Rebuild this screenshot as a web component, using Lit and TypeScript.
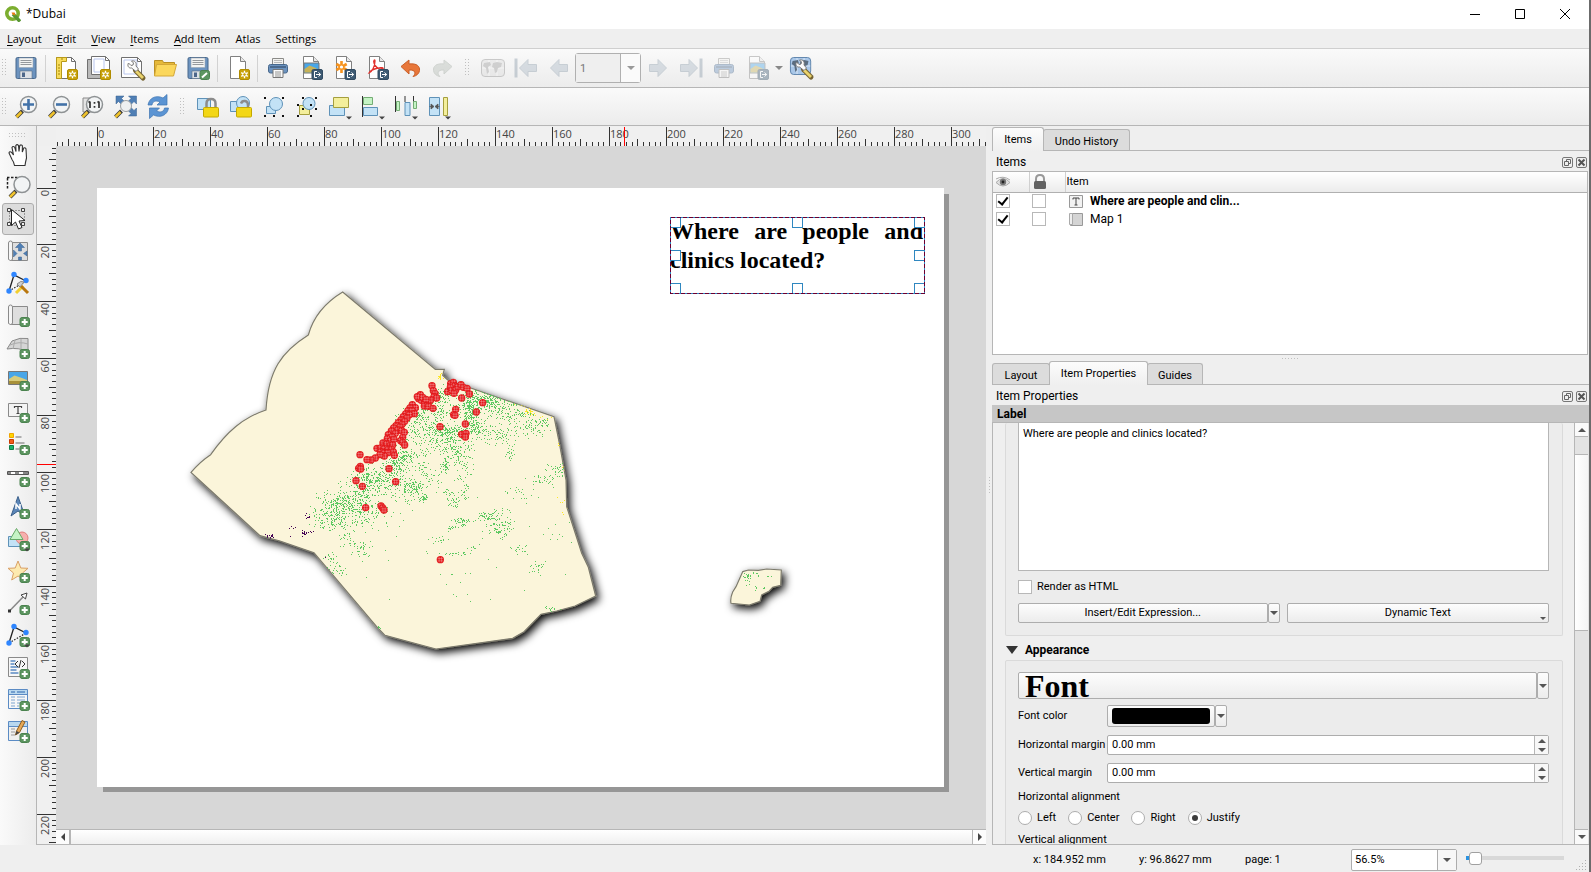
import { LitElement, html, svg, css, TemplateResult, SVGTemplateResult } from "lit";
import { customElement, property, state } from "lit/decorators.js";
import { classMap } from "lit/directives/class-map.js";

/* ---------- icon pieces ---------- */

const badgeNew = svg`<rect x="13.500" y="13.500" width="10" height="10" rx="1.500" fill="#c9a30c" stroke="#b08c00"/>
  <path d="M18.500 14.800v7.400M15.200 16.600l6.600 3.800M15.200 20.400l6.600-3.800" stroke="#fff" stroke-width="1.300"/>
  <circle cx="18.500" cy="18.500" r="1.800" fill="#c9a30c" stroke="#fff"/>`;
const badgePlus = svg`<rect x="14" y="14.500" width="9.500" height="9" rx="2" fill="#5c9560" stroke="#4a824e"/>
  <path d="M18.700 16v6M15.700 19h6" stroke="#fff" stroke-width="2"/>`;
const badgeExport = svg`<rect x="13" y="13.500" width="10.500" height="10" rx="1.500" fill="#3d5a73" stroke="#324b61"/>
  <path d="M18 15.500h-2.500v6H18M17 18.500h4.500M19.500 16.500l2.200 2-2.200 2" stroke="#fff" fill="none"/>`;
const page = svg`<path d="M4.500 .5h10l5 5v17h-15z" fill="#fff" stroke="#808080"/><path d="M14.500 .5v5h5" fill="#e8e8e8" stroke="#808080"/>`;
const floppy = svg`<rect x="2" y="1.500" width="20" height="21" rx="1.500" fill="#6c93bf" stroke="#48688c"/>
  <path d="M5 2h14v9.500H5z" fill="#f4f4f2" stroke="#9aa6b2" stroke-width=".6"/><path d="M6.500 4.500h11M6.500 6.500h11M6.500 8.500h11" stroke="#8b8f92" stroke-width=".9"/>
  <path d="M6 15h12v7.500H6z" fill="#dde1e6" stroke="#5b6f86" stroke-width=".6"/><path d="M8 16.500h3v4.500H8z" fill="#4d678a"/>`;
const printer = svg`<path d="M6.500 2.500h11v6h-11z" fill="#f3f3f1" stroke="#8b8b88"/><path d="M8 4.500h8M8 6.500h8" stroke="#aaa" stroke-width=".8"/>
  <rect x="2.500" y="8.500" width="19" height="8.500" rx="2" fill="#6c93bf" stroke="#48688c"/><path d="M4 11h16" stroke="#3d5878" stroke-width="1.400"/>
  <path d="M7 13.500h10v8H7z" fill="#fafafa" stroke="#777"/><path d="M9 16h6M9 18h6M9 20h6" stroke="#8b8b88" stroke-width=".9"/>`;
const picture = svg`<path d="M5 7h15v10H5z" fill="#49a6e8" stroke="#777"/><path d="M5.500 13l5-3.500 5 2 4.500 2.500v2.500H5.500z" fill="#c7b257"/>`;
const lens = svg`<path d="M2.500 22l6-6" stroke="#3c3c3c" stroke-width="4"/><path d="M2.500 22l5-5" stroke="#f0c32c" stroke-width="2.500"/>
  <circle cx="14.500" cy="9.500" r="8" fill="#f2f4f5" stroke="#8e9294" stroke-width="1.500"/>`;
const wrench = svg`<path d="M13.500 13.500l7.500 7.500" stroke="#766431" stroke-width="5" stroke-linecap="round"/><path d="M14 14l7 7" stroke="#ead36c" stroke-width="2.800"/>
  <path d="M14 14.500L9.500 11C6.500 11.500 5 8.500 6.500 6l2.500 2.500 2-.5.500-2L9.500 4c3-.8 5.500 1.500 4.500 5l2.500 3z" fill="#fbfbfb" stroke="#7a7a7a"/>`;
const roll = svg`<path d="M6 3.500h15.500v18H4" fill="#dedede" stroke="#8a8a8a"/><path d="M2.500 4q0-2 2-2t2 2v16.500q-2 2-4 0z" fill="#f5f5f5" stroke="#8a8a8a"/>`;
const nodeShape = svg`<path d="M3 20L8 4l12 6" fill="none" stroke="#222" stroke-width="1.300"/><path d="M3 20l17-10" stroke="#222" stroke-width="1.200" stroke-dasharray="1.500 1.500"/>
  <g fill="#2f86ff"><circle cx="3" cy="20" r="2.700"/><circle cx="8" cy="3.500" r="2.700"/><circle cx="20" cy="9.500" r="2.700"/></g>`;
const world = svg`<rect x=".5" y="3.500" width="23" height="17" rx="3.500" fill="#a9c7e8" stroke="#5c82ab"/>
  <path d="M8 4v16M16 4v16M1 12h22" stroke="#e8f0f8" stroke-width=".8"/>
  <path d="M3 7l6-1 1 3-3 2 1 5-2 2-1-6-3-2zM12 7l4-1 5 1-1 4-3 1-1 4-2 1-1-5-2-1z" fill="#5b6d80"/>`;
const dropMark = svg`<path d="M18 21.500h6l-3 3z" fill="#444"/>`;
const arrowLeft = svg`<path d="M3.500 12L12 3.500v5h8.500v7H12v5z" fill="#a9b7c4" stroke="#8697a6"/>`;

const icons: Record<string, SVGTemplateResult> = {
  save: floppy,
  newLayout: svg`<path d="M2.500 1.500h15l4 4v17h-19z" fill="#fff" stroke="#707070"/><path d="M2.500 1.500h10v4h-5v17h-5z" fill="#f8dc5b" stroke="#b89a1a"/>
    <path d="M4 9h2M4 12h2M4 15h2M4 18h2M8 2v2" stroke="#a3860b"/><path d="M17.500 1.500v4h4" fill="none" stroke="#707070"/>${badgeNew}`,
  duplicate: svg`<path d="M.5 3.500h17v19H.5z" fill="#b9b9b9" stroke="#707070"/><path d="M4.500 .5h14l4 4v14h-18z" fill="#fff" stroke="#707070"/>
    <path d="M7 3h10v13H7z" fill="none" stroke="#b9c6ee"/><path d="M18.500 .5v4h4" fill="none" stroke="#707070"/>${badgeNew}`,
  manager: svg`<path d="M1.500 1.500h16l4 4v16h-20z" fill="#fff" stroke="#707070"/><path d="M4 4h13v14H4z" fill="none" stroke="#b9c6ee"/>
    <path d="M17.500 1.500v4h4" fill="none" stroke="#707070"/><g transform="translate(2 1)">${wrench}</g>`,
  folder: svg`<path d="M1.500 20V4.500h8l1 2h11V10" fill="#e6b93a" stroke="#b98f24"/><path d="M3.500 8.500h20L20.500 20H1.500z" fill="#fbd75c" stroke="#d4a838"/>`,
  saveTemplate: svg`${floppy}<rect x="14" y="14.500" width="9.500" height="9" rx="2" fill="#5c9560" stroke="#4a824e"/><path d="M16 21.500l5-4.500" stroke="#fff" stroke-width="2"/>`,
  addPage: svg`${page}${badgeNew}`,
  print: printer,
  exportImage: svg`${page}${picture}${badgeExport}`,
  exportSvg: svg`${page}<path d="M9.500 5v12M4.300 8l10.400 6M4.300 14l10.400-6" stroke="#f7931e" stroke-width="2.600"/><circle cx="9.500" cy="11" r="1.600" fill="#fff"/>${badgeExport}`,
  exportPdf: svg`${page}<path d="M4 17c3-1 6-7 6-12 0-2-2-1-1 2 1 4 5 7 9 6 1-1-2-2-5-1-4 1-8 3-9 5z" fill="none" stroke="#e2312d" stroke-width="1.300"/>${badgeExport}`,
  undo: svg`<path d="M3 10.500L11 4v4c8-1 11 2.500 10.500 6.500-.3 3-3 5.500-6.500 6 3-2.500 3-7-4-6.500v4z" fill="#e8773a" stroke="#c95f28"/>`,
  redo: svg`<path d="M21 10.500L13 4v4C5 7 2 10.500 2.500 14.500c.3 3 3 5.500 6.500 6-3-2.500-3-7 4-6.500v4z" fill="#b4bcb4" stroke="#9ba39b"/>`,
  atlas: svg`<rect x=".5" y="3.500" width="23" height="17" rx="3.500" fill="#dcdcdc" stroke="#888"/>
    <path d="M8 4v16M16 4v16M1 12h22" stroke="#fff" stroke-width=".8"/>
    <path d="M3 7l6-1 1 3-3 2 1 5-2 2-1-6-3-2zM12 7l4-1 5 1-1 4-3 1-1 4-2 1-1-5-2-1z" fill="#999"/>`,
  first: svg`<path d="M2 2.500v19" stroke="#8697a6" stroke-width="3"/><g transform="translate(2 0)">${arrowLeft}</g>`,
  prev: arrowLeft,
  next: svg`<g transform="matrix(-1 0 0 1 24 0)">${arrowLeft}</g>`,
  last: svg`<path d="M22 2.500v19" stroke="#8697a6" stroke-width="3"/><g transform="matrix(-1 0 0 1 22 0)">${arrowLeft}</g>`,
  atlasSettings: svg`<g transform="translate(0 -2) scale(.88 1)">${world}</g>${wrench}`,
  zoomIn: svg`${lens}<path d="M14.500 4v11M9 9.500h11" stroke="#4272a8" stroke-width="2.600"/>`,
  zoomOut: svg`${lens}<path d="M9 9.500h11" stroke="#4272a8" stroke-width="2.600"/>`,
  zoomActual: svg`<path d="M3 3h8v14H3z" fill="#e4e4e4" stroke="#8a8a8a"/>${lens}
    <path d="M10 6.500v6.500M8.500 7.500l1.500-1M19 6.500v6.500M17.500 7.500l1.500-1" stroke="#333" stroke-width="1.700" fill="none"/><path d="M14.500 7v1.800M14.500 11v1.800" stroke="#333" stroke-width="1.700"/>`,
  zoomFull: svg`<g fill="#4f7fb5" stroke="#38608f" stroke-width=".5"><path d="M3 1h8L8.500 3.500l4 4-3 3-4-4L3 9zM23.500 1h-8L18 3.500l-4 4 3 3 4-4 2.500 2.500zM23.500 21h-8l2.500-2.500-4-4 3-3 4 4 2.500-2.500z"/></g>
    <path d="M2.500 22l6-6" stroke="#3c3c3c" stroke-width="4"/><path d="M2.500 22l5-5" stroke="#f0c32c" stroke-width="2.500"/><circle cx="13" cy="11" r="5.500" fill="#eef0f1" stroke="#9b9fa1"/>`,
  refresh: svg`<g fill="#5b94d3" stroke="#3c72b0" stroke-width=".7"><path d="M2 10C3 3 10 -.5 17 3l4-3.500V10H11l3-3C9.500 5 6.500 6.500 6 10z"/><path d="M22.500 13c-1 7-8 10.500-15 7l-4 3.500V13h10l-3 3c4.500 2 7.500.5 8-3z"/></g>`,
  lock: svg`<path d="M1.500 3.500h13v11h-13z" fill="#c3e2f6" stroke="#5f92b8"/><path d="M10.500 13V8.500q0-4.500 4.500-4.500t4.500 4.500V13" fill="none" stroke="#8c8c8c" stroke-width="2.500"/>
    <rect x="7.500" y="12.500" width="15" height="9.500" rx="1" fill="#f3d715" stroke="#c4a800"/>`,
  unlock: svg`<path d="M1.500 6.500h9v10h-9z" fill="#c3e2f6" stroke="#5f92b8"/><circle cx="14" cy="8" r="6.500" fill="#c3e2f6" stroke="#5f92b8"/>
    <path d="M12 8.500q1-3 4-2.500 3 .5 3 4V13" fill="none" stroke="#8c8c8c" stroke-width="2.500"/><rect x="7.500" y="12.500" width="15" height="9.500" rx="1" fill="#f3d715" stroke="#c4a800"/>`,
  group: svg`<path d="M4.500 11.500h9v7h-9z" fill="#c3e2f6" stroke="#5f92b8"/><circle cx="14" cy="9" r="6.500" fill="#c3e2f6" stroke="#5f92b8"/>
    <path d="M2 2h2v2H2zM20 2h2v2h-2zM2 20h2v2H2zM20 20h2v2h-2zM11 20h2v2h-2z" fill="#111"/>`,
  ungroup: svg`<path d="M4.500 10.500h10v9h-10z" fill="#f4ef9c" stroke="#a59f3e"/><circle cx="14" cy="8.500" r="6" fill="#c3e2f6" stroke="#5f92b8"/>
    <path d="M7 2h2v2H7zM20 2h2v2h-2zM2 9h2v2H2zM2 20h2v2H2zM15 20h2v2h-2zM20 13h2v2h-2zM7 13h2v2H7zM15 9h2v2h-2z" fill="#111"/>`,
  raise: svg`<path d="M1.500 10.500h15v10h-15z" fill="#c3e2f6" stroke="#5f92b8"/><path d="M5.500 2.500h15v10h-15z" fill="#f4ef9c" stroke="#a59f3e"/>${dropMark}`,
  align: svg`<path d="M1.500 1v21" stroke="#333"/><path d="M2.500 2.500h9v7h-9z" fill="#c5f3c5" stroke="#74ad74"/><path d="M2.500 12.500h14v8h-14z" fill="#c3e2f6" stroke="#5f92b8"/>${dropMark}`,
  distribute: svg`<path d="M1.500 1v16M11 1v6M19.500 1v8" stroke="#333"/><path d="M2.500 6.500h3v9h-3zM19.500 6.500h3v7h-3z" fill="#c5f3c5" stroke="#74ad74"/><path d="M11 7.500h5v13h-5z" fill="#c3e2f6" stroke="#5f92b8"/>${dropMark}`,
  resize: svg`<path d="M2.500 2.500h10v18h-10z" fill="#c3e2f6" stroke="#5f92b8"/><path d="M16.500 2.500h4v18h-4z" fill="#f4ef9c" stroke="#a59f3e"/>
    <path d="M2.500 11.500h3M9.500 11.500h3M4 9l3 2.500L4 14zM11 9l-3 2.500 3 2.500z" stroke="#555" fill="#555" stroke-width=".8"/>${dropMark}`,
  pan: svg`<path d="M8.500 22.500Q8 19 6 16.500L3 10q.5-2 2.400-.8L7.500 12 6 4.500q1-1.700 2.600-.3L10 8.500 9.800 2.500q1.300-1.700 2.700 0L13 8.500l.8-6q1.600-1.300 2.600.3L16.300 9l1.500-4q1.800-.7 2.200 1L20.500 15q-1 4-1.500 7.500z" fill="#fff" stroke="#333" stroke-width="1.100"/>`,
  zoomTool: svg`<path d="M1 2.500h20M1.500 3v12" stroke="#222" stroke-width="1.500" stroke-dasharray="2.500 1.500"/><g transform="translate(1.500 0)">${lens}</g>`,
  select: svg`<path d="M3.500 3.500h15v15h-15z" fill="none" stroke="#555" stroke-dasharray="1 2"/><path d="M1.500 1.500h3v3h-3zM15.500 1.500h3v3h-3zM1.500 15.500h3v3h-3zM15.500 15.500h3v3h-3z" fill="#eee" stroke="#444"/>
    <path d="M5.500 2.500v16l4-3.500 3 7 3.500-1.500-3-6.500 6-.5z" fill="#fff" stroke="#222"/>`,
  moveContent: svg`${roll}<g fill="#4f7fb5" stroke="#38608f" stroke-width=".5"><path d="M14 4l4.500 4.500h-3V12h-3V8.500h-3zM7.500 11l3.500 3.500L7.500 18zM21 12l-3.500 2.500L21 17zM12.500 18h3v3h-3z"/></g>`,
  editNodes: svg`${nodeShape}<path d="M10 22l7-7" stroke="#f2cf2f" stroke-width="3"/><path d="M22 22l-7-7" stroke="#b9770e" stroke-width="3"/><path d="M11 13q4-4 7-2l-4 5z" fill="#cfcfcf" stroke="#888"/>`,
  addMap: svg`${roll}${badgePlus}`,
  add3d: svg`<path d="M1 14l5-8q8-4 16-2.500V17q-9-5-21-3z" fill="#d5d5d5" stroke="#8a8a8a"/><path d="M4 10q9-4 18-1M9 5l-2 9M15 4v11" stroke="#aaa" fill="none"/>${badgePlus}`,
  addPicture: svg`<path d="M2.500 4.500h19v13h-19z" fill="#49a6e8" stroke="#777"/><path d="M3 12l5.500-3.500L16 11l5 2v4H3z" fill="#d8cc7c"/><path d="M3 14h18v3H3z" fill="#a8913a"/>${badgePlus}`,
  addLabel: svg`<path d="M2.500 4.500h19v13h-19z" fill="#f4f4f4" stroke="#8a8a8a"/><path d="M8.500 9V7.500h7V9M12 7.500v7M10.500 14.500h3" stroke="#444" stroke-width="1.200" fill="none"/>${badgePlus}`,
  addLegend: svg`<path d="M3.500 2.500h4v4h-4z" fill="#fdd400" stroke="#f0a500"/><path d="M3.500 8.500h4v4h-4z" fill="#f25b1c" stroke="#c63a00"/><path d="M3.500 14.500h4v4h-4z" fill="#18b36b" stroke="#0d7d48"/>
    <path d="M9.500 6h6M9.500 12h9M9.500 18h4" stroke="#999" stroke-width="1.600"/>${badgePlus}`,
  addScale: svg`<path d="M1.500 8.500h21v3h-21z" fill="#fff" stroke="#555"/><path d="M2 10h3M9 10h4M17 10h5" stroke="#888" stroke-width="2"/>${badgePlus}`,
  addNorth: svg`<path d="M12 1.500L19 21l-7-5-7 5z" fill="#5b86b8" stroke="#3b5f8a"/><path d="M10 14V9l4 5V9" stroke="#fff" fill="none" stroke-width="1.500"/>${badgePlus}`,
  addShape: svg`<path d="M2.500 9.500h12v10h-12z" fill="#c3e2f6" stroke="#5f92b8"/><circle cx="16" cy="11" r="6" fill="#f6b0ae" stroke="#e07e7c"/><path d="M10.500 1.500l6.500 11H4z" fill="#c5f3c5" stroke="#66a866"/>${badgePlus}${dropMark}`,
  addMarker: svg`<path d="M12 2l2.800 7 7.200.3-5.500 4.700 1.800 7L12 17l-6.300 4 1.800-7L2 9.300 9.200 9z" fill="#fdeab0" stroke="#d9a066"/>${badgePlus}`,
  addArrow: svg`<path d="M3.500 20L18 5" stroke="#888" stroke-width="1.500"/><path d="M2 18.500h3v3H2z" fill="#333"/><path d="M21 2l-1.500 6-4.500-4z" fill="#fff" stroke="#444"/>${badgePlus}`,
  addNode: svg`${nodeShape}${badgePlus}${dropMark}`,
  addHtml: svg`<path d="M2.500 2.500h19v19h-19z" fill="#f7f7f7" stroke="#8a8a8a"/><path d="M4.500 6h5M4.500 9h4M4.500 12h8M4.500 15h6M4.500 18h8" stroke="#5b8bc4" stroke-width="1.700"/>
    <path d="M12 6l-3 3 3 3M16 6l3 3-3 3M15 5l-2 8" stroke="#333" fill="none"/>${badgePlus}`,
  addTable: svg`<path d="M2.500 2.500h19v19h-19z" fill="#f7f7f7" stroke="#5b8bc4"/><path d="M3 3h18v4H3z" fill="#b9d8ef"/><path d="M3 7.500h18" stroke="#5b8bc4"/><path d="M5 5h4M11 5h8" stroke="#5b8bc4" stroke-width="1.500"/>
    <path d="M5 10h4M11 10h8M5 13h4M11 13h8M5 16h4M11 16h4M5 19h4M11 19h2" stroke="#7fa5cf" stroke-width="1.200"/>${badgePlus}`,
  addFixed: svg`<path d="M2.500 2.500h19v19h-19z" fill="#f0f0ee" stroke="#5b8bc4"/><path d="M3 3h18v4H3z" fill="#b9d8ef"/><path d="M3 7.500h18" stroke="#5b8bc4"/>
    <path d="M5 10h4M5 13h4M5 16h4" stroke="#999"/><path d="M10.500 12L16 1.500l3 1.500-5.500 10.500-4 2.500z" fill="#e6a857" stroke="#8f5f1f"/><path d="M9.500 16l1-4 3 1.500z" fill="#444"/>${badgePlus}`,
};

const icon = (name: string, size = 24) =>
  html`<svg width=${size} height=${size} viewBox="0 0 24 24" overflow="visible" fill="none" aria-hidden="true">${icons[name]}</svg>`;

/* ---------- map data, in thirds of a screen pixel ---------- */

const OUTLINE =
  "M488 36L766 268H793L788 286L803 300L1122 410L1140 500L1158 600L1160 680L1205 820L1225 862L1247 948L1185 978L1130 993L1083 1003L1032 1055L998 1075L768 1107L615 1066L590 1040L402 818L300 783L240 767L33 577Q60 545 92 524C140 455 190 412 258 390C265 270 305 215 385 165C400 110 440 65 488 36Z";
const ISLAND = "M128 95L145 90L175 91L200 87L244 90L242 136L218 142L208 153L185 165L180 184L148 195L93 190Q90 175 98 156L108 140Z";

type Cluster = [number, number, number, number, number];
const POPULATION: Cluster[] = [
  [940, 352, 50, 15, 130], [970, 372, 60, 20, 120], [1000, 402, 50, 14, 70], [890, 350, 25, 22, 70], [868, 400, 16, 50, 180],
  [880, 375, 50, 20, 70], [800, 450, 32, 12, 130], [815, 490, 40, 26, 130], [825, 530, 30, 22, 50], [740, 440, 50, 30, 90],
  [735, 480, 60, 30, 80], [690, 430, 30, 30, 60], [890, 440, 28, 18, 70], [650, 560, 25, 22, 110], [665, 530, 22, 20, 60],
  [730, 400, 40, 16, 60], [785, 350, 30, 30, 80], [690, 520, 40, 20, 40], [780, 390, 40, 24, 60],
  [578, 590, 42, 28, 170], [540, 625, 40, 28, 90], [610, 610, 40, 30, 80], [500, 660, 50, 20, 150], [462, 692, 42, 26, 170],
  [500, 710, 60, 30, 70], [560, 690, 45, 24, 80], [440, 735, 30, 8, 25], [692, 620, 22, 16, 110], [727, 652, 11, 9, 32],
  [750, 590, 35, 25, 36], [670, 655, 25, 8, 12], [720, 560, 20, 15, 20], [850, 570, 20, 38, 34], [793, 563, 10, 12, 30],
  [1050, 438, 42, 20, 80], [960, 465, 45, 18, 75], [1090, 425, 20, 8, 14], [990, 522, 9, 16, 22], [1130, 572, 26, 16, 42],
  [1085, 598, 28, 12, 28], [1020, 640, 34, 20, 22], [825, 662, 18, 13, 38], [800, 635, 16, 7, 14], [855, 632, 6, 16, 16],
  [845, 725, 18, 10, 40], [810, 745, 10, 6, 10], [922, 708, 18, 10, 44], [960, 745, 28, 18, 80], [955, 700, 30, 16, 22],
  [1020, 808, 20, 12, 18], [510, 775, 20, 22, 30], [543, 808, 22, 16, 32], [452, 830, 16, 14, 18], [472, 868, 18, 12, 24],
  [835, 820, 32, 5, 20], [780, 776, 24, 7, 14], [880, 805, 22, 8, 10], [1075, 868, 24, 18, 18], [1110, 985, 12, 7, 10],
  [880, 800, 240, 110, 26], [860, 930, 180, 50, 12], [640, 740, 60, 50, 12], [1130, 760, 40, 40, 10], [595, 1044, 3, 3, 5],
];
const SPARSE: Cluster[] = [
  [783, 292, 9, 12, 18], [835, 306, 10, 6, 6], [1045, 392, 12, 10, 24], [1015, 373, 12, 4, 5], [1090, 410, 20, 4, 6],
  [1132, 492, 3, 6, 4], [1150, 562, 4, 8, 4], [1148, 665, 12, 14, 5], [1150, 700, 3, 4, 3],
];
const RURAL: Cluster[] = [[382, 710, 6, 6, 8], [338, 742, 12, 4, 5], [380, 757, 12, 8, 16], [272, 768, 14, 5, 16], [328, 769, 2, 2, 1], [402, 751, 2, 2, 1], [433, 833, 2, 2, 1]];
const ISLAND_POP: Cluster[] = [[142, 108, 11, 8, 18], [165, 101, 14, 5, 8], [142, 128, 6, 5, 3], [165, 138, 6, 8, 4], [192, 143, 3, 3, 3], [205, 106, 10, 3, 3]];

/* Bundles all clusters into one path of small squares, the same on every draw. */
const scatter = (clusters: Cluster[], seed: number): string => {
  let s = seed;
  const rnd = () => {
    s = (s * 1664525 + 1013904223) % 4294967296;
    return s / 4294967296;
  };
  const spread = () => (rnd() + rnd() + rnd() - 1.5) * 1.5;
  let d = "";
  for (const [cx, cy, rx, ry, n] of clusters)
    for (let i = 0; i < n; i++)
      d += `M${Math.round((cx + spread() * rx) / 3) * 3} ${Math.round((cy + spread() * ry) / 3) * 3}h3v3h-3z`;
  return d;
};

const CLINICS: [number, number][] = [
  [756, 317], [760, 332], [765, 340], [762, 350], [770, 354], [721, 344], [716, 356], [724, 361], [734, 364], [745, 368], [733, 378], [745, 379],
  [759, 385], [752, 360], [712, 350], [728, 352], [738, 358], [697, 374], [706, 383], [690, 384], [684, 392], [696, 392], [703, 401], [677, 402], [688, 404], [670, 410], [681, 414],
  [663, 420], [674, 424], [655, 428], [666, 433], [648, 437], [660, 441], [641, 444], [653, 450], [634, 453], [646, 460], [665, 452], [673, 457],
  [625, 464], [636, 470], [622, 476], [632, 482], [668, 472], [662, 482], [668, 487], [674, 495], [642, 478], [609, 489], [620, 492], [631, 496],
  [638, 495], [591, 505], [602, 504], [613, 506], [624, 508], [635, 508], [602, 516], [613, 518], [624, 518], [640, 516], [643, 526], [613, 528],
  [600, 524], [586, 534], [573, 540], [561, 539], [540, 524], [541, 559], [536, 565], [542, 567], [528, 602], [547, 619], [627, 566], [647, 605],
  [557, 683], [603, 678], [608, 684], [612, 690], [812, 311], [820, 307], [824, 318], [811, 322], [803, 335], [815, 331], [827, 330], [822, 340],
  [834, 320], [843, 314], [850, 322], [861, 325], [868, 342], [845, 354], [908, 368], [889, 396], [827, 388], [821, 404], [825, 406], [780, 440],
  [856, 432], [845, 463], [858, 460], [856, 471], [781, 839],
];

const MM = 2.847;

/* ---------- ruler ---------- */

@customElement("layout-ruler")
export class LayoutRuler extends LitElement {
  @property({ type: Boolean, reflect: true }) vertical = false;
  @property({ type: Number }) origin = 40;
  @property({ type: Number }) cursor = 0;
  @state() private span = 0;
  private watcher = new ResizeObserver(([e]) => {
    this.span = this.vertical ? e.contentRect.height : e.contentRect.width;
  });

  connectedCallback() {
    super.connectedCallback();
    this.watcher.observe(this);
  }
  disconnectedCallback() {
    super.disconnectedCallback();
    this.watcher.disconnect();
  }

  static styles = css`
    :host { display: block; overflow: hidden; background: #f0f0f0; height: 19px; }
    :host([vertical]) { height: auto; width: 19px; }
    svg { display: block; width: 100%; height: 100%; }
    .num { font: 11px "Open Sans", "Noto Sans", sans-serif; fill: #444; }
    .tick { stroke: #333; shape-rendering: crispEdges; }
    .here { stroke: #f00; shape-rendering: crispEdges; }
  `;

  render() {
    const marks: SVGTemplateResult[] = [];
    for (let mm = -14; this.origin + mm * MM < this.span; mm += 2) {
      const at = Math.floor(this.origin + mm * MM);
      if (at < 0) continue;
      const major = mm % 20 === 0;
      const len = major ? 19 : mm % 10 === 0 ? 7 : 4;
      const c = at + 0.5;
      marks.push(
        this.vertical
          ? svg`<line class="tick" x1=${19 - len} x2="19" y1=${c} y2=${c}/>`
          : svg`<line class="tick" y1=${19 - len} y2="19" x1=${c} x2=${c}/>`
      );
      if (major && at + 22 < this.span)
        marks.push(
          this.vertical
            ? svg`<text class="num" text-anchor="end" transform=${`translate(12 ${at + 2}) rotate(-90)`}>${mm}</text>`
            : svg`<text class="num" x=${at + 1} y="11">${mm}</text>`
        );
    }
    const k = this.cursor + 0.5;
    return html`<svg aria-hidden="true">${marks}${
      this.vertical ? svg`<line class="here" x1="0" x2="19" y1=${k} y2=${k}/>` : svg`<line class="here" y1="0" y2="19" x1=${k} x2=${k}/>`
    }</svg>`;
  }
}

/* ---------- page with its items ---------- */

@customElement("layout-sheet")
export class LayoutSheet extends LitElement {
  static styles = css`
    :host { display: block; position: relative; width: 847px; height: 599px; background: #fff; box-shadow: 5px 5px 0 #969696; }
    .shade { position: absolute; inset: auto auto -5px 0; width: 6px; height: 5px; background: #d7d7d7; }
    .corner { position: absolute; inset: 0 -5px auto auto; width: 5px; height: 6px; background: #d7d7d7; }
    .map { position: absolute; inset: 0; width: 100%; height: 100%; }
    .label { position: absolute; left: 573px; top: 29px; width: 255px; height: 77px; }
    .text { margin: 0; padding-right: 2px; font: bold 24px/29px "Liberation Serif", "Times New Roman", serif; color: #000; text-align: justify; }
    .frame { position: absolute; inset: 0; width: 100%; height: 100%; overflow: visible; }
    .crisp { shape-rendering: crispEdges; }
  `;

  render() {
    const handles: SVGTemplateResult[] = [];
    for (const y of [0.5, 33.5, 66.5])
      for (const x of [0.5, 122.5, 244.5])
        if (x !== 122.5 || y !== 33.5) handles.push(svg`<rect x=${x} y=${y} width="10" height="10" fill="#fff" stroke="#2f87c0"/>`);
    return html`
      <div class="shade"></div>
      <div class="corner"></div>
      <svg class="map" role="img" aria-label="Map 1">
        <defs>
          <filter id="drop" x="-10%" y="-10%" width="125%" height="125%">
            <feDropShadow dx="9" dy="11" stdDeviation="13" flood-color="#000" flood-opacity="1"/>
          </filter>
          <filter id="drop-small" x="-40%" y="-40%" width="190%" height="200%">
            <feDropShadow dx="9" dy="11" stdDeviation="12" flood-color="#000" flood-opacity="1"/>
          </filter>
          <clipPath id="land"><path d=${OUTLINE}/></clipPath>
          <g id="clinic">
            <circle r="11" fill="#e31a1c"/>
            <path d="M-8 -3.500H8M-8 3.500H8M-3.500 -8V8M3.500 -8V8" stroke="#fff" stroke-opacity=".5" stroke-width="1.500"/>
          </g>
        </defs>
        <g transform="translate(83 92) scale(0.333333)">
          <path d=${OUTLINE} fill="#fbf5da" stroke="#7c7a6c" stroke-width="3.500" filter="url(#drop)"/>
          <g clip-path="url(#land)" class="crisp">
            <path d=${scatter(POPULATION, 7)} fill="#5ec962"/>
            <path d=${scatter(SPARSE, 11)} fill="#fde725"/>
            <path d=${scatter(RURAL, 5)} fill="#440154"/>
          </g>
          ${CLINICS.map(([x, y]) => svg`<use href="#clinic" x=${x} y=${y}/>`)}
        </g>
        <g transform="translate(603 352) scale(0.333333)">
          <path d=${ISLAND} fill="#fbf5da" stroke="#7c7a6c" stroke-width="3.500" filter="url(#drop-small)"/>
          <path class="crisp" d=${scatter(ISLAND_POP, 3)} fill="#5ec962"/>
        </g>
      </svg>
      <div class="label">
        <p class="text">Where are people and clinics located?</p>
        <svg class="frame crisp" aria-hidden="true">
          <rect x="0.500" y="0.500" width="254" height="76" fill="none" stroke="#2f87c0"/>
          ${handles}
          <rect x="0.500" y="0.500" width="254" height="76" fill="none" stroke="#6b0032" stroke-dasharray="4 2"/>
        </svg>
      </div>
    `;
  }
}

/* ---------- window ---------- */

const ATLAS_OFF = ["atlas", "first", "prev"];

@customElement("app-root")
export class AppRoot extends LitElement {
  @state() private align = "Justify";
  @state() private zoom = "56.5%";

  static styles = css`
    * { box-sizing: border-box; }
    :host {
      display: flex; flex-direction: column; height: 100vh; overflow: hidden; background: #efefef; color: #000;
      font: 11px/16px Roboto, "Open Sans", sans-serif; border-right: 2px solid #6b6b6b;
    }
    button, input, select, textarea { font: inherit; color: inherit; margin: 0; padding: 0; border-radius: 0; }
    button { background: none; border: 0; }
    svg { display: block; flex: none; }

    .titlebar { display: flex; align-items: center; height: 29px; background: #fff; padding: 0 2px 2px 5px; font: 12px/16px "Open Sans", sans-serif; flex: none; }
    .title { flex: 1; padding-left: 5px; }
    .win { width: 45px; height: 27px; display: grid; place-items: center; }
    .menubar { display: flex; align-items: center; height: 20px; padding-left: 7px; gap: 15px; border-bottom: 1px solid #cfcfcf; font: 11px/16px "Open Sans", sans-serif; flex: none; }
    .menubar a { color: inherit; text-decoration: none; }
    u { text-underline-offset: 2px; }

    .bar { display: flex; align-items: center; height: 39px; padding: 0 9px; position: relative; flex: none; border-bottom: 1px solid #b6b6b6; background: linear-gradient(#fafafa, #ececec); }
    .bar.second { height: 38px; }
    .tool { width: 33px; height: 32px; display: grid; place-items: center; flex: none; }
    .tool:disabled { opacity: .4; }
    .tool.on { background: #dcdcdc; border: 1px solid #adadad; border-radius: 3px; }
    .sep { width: 1px; height: 27px; margin: 0 3px; background: #d2d2d2; }
    .grip { width: 17px; height: 18px; flex: none; display: grid; place-items: center; }
    .dots { width: 5px; height: 18px; background-image: conic-gradient(from 270deg at 1px 1px, #c0c0c0 90deg, transparent 0); background-size: 3px 3px; }
    .dots.lead { position: absolute; left: 2px; top: 10px; }
    .dots.flat { width: 17px; height: 5px; }
    .caret { width: 12px; display: grid; place-items: center; }
    .pageno { display: flex; width: 66px; height: 30px; border: 1px solid #b0b0b0; border-radius: 3px; color: #777; }
    .pageno input { width: 45px; background: #efefef; border: 0; border-right: 1px solid #b0b0b0; padding: 2px 4px 0; }
    .pageno button { flex: 1; display: grid; place-items: center; background: #fafafa; }

    .main { flex: 1; display: flex; min-height: 0; }
    .toolbox { width: 36px; display: flex; flex-direction: column; align-items: center; padding: 7px 1px 0 0; background: linear-gradient(90deg, #fafafa, #ececec); flex: none; }
    .toolbox .dots { margin-bottom: 1px; }
    .toolbox .tool { width: 32px; }
    .work { flex: 1; min-width: 0; display: grid; grid-template: 20px minmax(0, 1fr) 15px / 19px minmax(0, 1fr); border-left: 1px solid #b6b6b6; border-bottom: 1px solid #b6b6b6; }
    .topruler { grid-area: 1 / 2; margin-top: 1px; }
    .sideruler { grid-area: 2 / 1 / 4 / 2; }
    .canvas { grid-area: 2 / 2; background: #d7d7d7; overflow: hidden; padding: 42px 0 0 41px; }
    .hscroll { grid-area: 3 / 2; display: flex; border-top: 1px solid #b6b6b6; background: #fcfcfc; }
    .arrow { width: 13px; display: grid; place-items: center; flex: none; }
    .thumb { flex: 1; background: linear-gradient(#fff, #f0f0f0); border: solid #b6b6b6; border-width: 0 1px 0 2px; }

    .split { width: 6px; display: grid; align-content: center; justify-content: center; flex: none; }
    .split .dots { width: 1px; height: 17px; }
    .dock { width: 597px; display: flex; flex-direction: column; min-height: 0; flex: none; padding-top: 1px; }
    .tabs { display: flex; align-items: flex-end; height: 24px; border-bottom: 1px solid #b6b6b6; flex: none; }
    .tab { height: 21px; padding: 3px 0 0; text-align: center; border: 1px solid #b6b6b6; border-bottom: 0; background: #dcdcdc; margin-left: -1px; border-radius: 3px 3px 0 0; }
    .tab:first-child { margin-left: 0; }
    .tab.on { height: 24px; margin-bottom: -1px; padding: 1px 0 0; background: linear-gradient(#fcfcfc, #efefef); position: relative; }
    .w52 { width: 52px; } .w58 { width: 58px; } .w87 { width: 87px; } .w99 { width: 99px; } .w56 { width: 56px; }
    .head { display: flex; align-items: center; height: 20px; padding: 2px 2px 0 4px; gap: 3px; flex: none; }
    .head h2 { flex: 1; margin: 0; font: inherit; font-size: 12px; }
    .mini { width: 11px; height: 11px; display: grid; place-items: center; border: 1px solid #777; border-radius: 2px; }

    .list { height: 184px; border: 1px solid #b6b6b6; background: #fff; flex: none; margin-right: 1px; }
    table { width: 100%; border-collapse: collapse; table-layout: fixed; }
    th { height: 20px; padding: 0; background: linear-gradient(#fff, #ebebeb); border-right: 1px solid #d0d0d0; border-bottom: 1px solid #b0b0b0; text-align: left; font-weight: normal; }
    th:last-child { border-right: 0; padding-left: 1px; }
    td { height: 18px; padding: 0; }
    .c1 { width: 36px; }
    .in { display: flex; align-items: center; padding-left: 3px; gap: 7px; font-size: 12px; }
    .name { padding-left: 1px; }
    .strong { font-weight: bold; }
    .handle { height: 6px; display: grid; place-items: center; flex: none; }
    .handle .dots { height: 1px; }

    input[type="checkbox"] { appearance: none; width: 14px; height: 14px; border: 1px solid #b8b8b8; background: #fff; display: grid; place-items: center; flex: none; }
    input[type="checkbox"]:checked::before { content: ""; width: 4px; height: 8px; border: solid #000; border-width: 0 2px 2px 0; transform: translateY(-1px) rotate(38deg); }
    input[type="radio"] { appearance: none; width: 14px; height: 14px; border: 1px solid #adadad; border-radius: 50%; background: #fff; display: grid; place-items: center; flex: none; }
    input[type="radio"]:checked::before { content: ""; width: 6px; height: 6px; border-radius: 50%; background: #3c3c3c; }

    .kind { height: 18px; padding: 1px 5px; background: #c6c6c6; border-bottom: 1px solid #b6b6b6; font-weight: bold; font-size: 12px; flex: none; margin: 0; line-height: 16px; }
    .pane { flex: 1; min-height: 0; display: flex; border: solid #b6b6b6; border-width: 0 0 1px 1px; }
    .props { flex: 1; min-width: 0; overflow: hidden; padding: 0 11px 0 12px; }
    .group { border: 1px solid #dadada; background: #ececec; border-radius: 2px; padding: 11px 13px 0 12px; display: flex; flex-direction: column; }
    .group.top { border-top: 0; padding: 0 13px 12px 12px; }
    textarea { display: block; width: 100%; height: 148px; resize: none; border: 1px solid #b6b6b6; border-top: 0; background: #fff; padding: 3px 4px; outline: 0; }
    .check { display: flex; align-items: center; gap: 5px; margin: 8px 0; }
    .row { display: flex; }
    .row.pair { gap: 7px; }
    .btn { height: 20px; border: 1px solid #adadad; border-radius: 2px; background: linear-gradient(#fdfdfd, #ececec); display: grid; place-items: center; }
    .grow { flex: 1; }
    .half { flex: 263 1 0; display: flex; }
    .drop { width: 12px; flex: none; }
    .dyn { flex: 262 1 0; position: relative; }
    .dyn svg { position: absolute; right: 2px; bottom: 2px; }
    .section { display: flex; align-items: center; height: 24px; gap: 7px; padding: 4px 0 0 1px; margin: 0; font-size: 12px; font-weight: bold; width: 100%; }
    .fontbtn { display: block; text-align: left; padding-left: 6px; overflow: hidden; font: bold 32px/26px "Liberation Serif", serif; }
    .tall { height: 27px; }
    .form { display: grid; grid-template-columns: 89px minmax(0, 1fr); align-items: center; row-gap: 8px; margin-top: 6px; }
    .color { width: 108px; height: 22px; padding: 2px 4px; }
    .swatch { width: 98px; height: 16px; border-radius: 3px; background: #000; }
    .mid { height: 22px; }
    .spin { display: flex; height: 20px; border: 1px solid #adadad; border-radius: 2px; background: #fff; }
    .spin input { flex: 1; min-width: 0; border: 0; padding: 0 4px; background: none; outline: 0; }
    .steps { width: 14px; border-left: 1px solid #b6b6b6; display: flex; flex-direction: column; background: #f7f7f7; }
    .steps button { flex: 1; display: grid; place-items: center; }
    fieldset { border: 0; padding: 0; margin: 6px 0 0; min-width: 0; }
    legend { padding: 0; }
    .radios { display: flex; gap: 12px; margin-top: 5px; }
    .radios label { display: flex; align-items: center; gap: 5px; }
    .vscroll { width: 15px; padding-right: 1px; display: flex; flex-direction: column; border-left: 1px solid #b6b6b6; background: #e3e3e3; flex: none; }
    .vscroll button { height: 14px; display: grid; place-items: center; background: #fafafa; }
    .vthumb { height: 177px; margin-top: 17px; background: linear-gradient(90deg, #fff, #f4f4f4); border: solid #b6b6b6; border-width: 1px 0; }
    .rest { flex: 1; border-bottom: 1px solid #b6b6b6; }
    .vscroll button:first-child { border-bottom: 1px solid #b6b6b6; }

    .status { height: 27px; display: flex; align-items: center; justify-content: flex-end; flex: none; padding-top: 2px; }
    .status output { width: 106px; }
    .zoombox { display: grid; grid-template-columns: 85px 19px; width: 106px; height: 22px; border: 1px solid #adadad; border-radius: 2px; background: #fff; }
    .zoombox select { grid-area: 1 / 1 / 2 / 3; appearance: none; border: 0; background: none; padding-left: 3px; outline: 0; }
    .zoombox .mark { grid-area: 1 / 2; pointer-events: none; border-left: 1px solid #adadad; display: grid; place-items: center; background: #f7f7f7; }
    .slider { appearance: none; width: 98px; height: 14px; margin: 0 11px 3px 9px; background: linear-gradient(90deg, #2a92e0 8px, #d8d8d8 8px) center / 100% 4px no-repeat; }
    .slider::-webkit-slider-thumb { appearance: none; width: 13px; height: 13px; border: 1px solid #a0a0a0; border-radius: 3px; background: #fff; }
    .size { width: 14px; align-self: flex-end; }
  `;

  private tool(name: string, label: string, opts: { off?: boolean; on?: boolean } = {}): TemplateResult {
    return html`<button class=${classMap({ tool: true, on: !!opts.on })} ?disabled=${!!opts.off} aria-label=${label} title=${label}>${icon(name)}</button>`;
  }

  private down(w = 8, h = 4, fill = "#555") {
    return html`<svg width=${w} height=${h} viewBox="0 0 8 4" preserveAspectRatio="none" aria-hidden="true"><path d="M0 0h8l-4 4z" fill=${fill}/></svg>`;
  }
  private up() {
    return html`<svg width="8" height="4" viewBox="0 0 8 4" aria-hidden="true"><path d="M0 4h8l-4-4z" fill="#555"/></svg>`;
  }
  private side(d: string) {
    return html`<svg width="4" height="8" viewBox="0 0 4 8" aria-hidden="true"><path d=${d} fill="#444"/></svg>`;
  }

  private head(title: string) {
    return html`<div class="head">
      <h2>${title}</h2>
      <button class="mini" aria-label="Float ${title}"><svg width="9" height="9" viewBox="0 0 9 9" fill="none" stroke="#666"><path d="M3.500 3V1.500h4v4H6M1.500 3.500h4v4h-4z"/></svg></button>
      <button class="mini" aria-label="Close ${title}"><svg width="9" height="9" viewBox="0 0 9 9" stroke="#555" stroke-width="2"><path d="M1.500 1.500l6 6M7.500 1.500l-6 6"/></svg></button>
    </div>`;
  }

  private spin(id: string, label: string) {
    return html`<label for=${id}>${label}</label>
      <div class="spin">
        <input id=${id} type="text" value="0.00 mm" />
        <span class="steps">
          <button aria-label="Increase ${label}">${this.up()}</button>
          <button aria-label="Decrease ${label}">${this.down()}</button>
        </span>
      </div>`;
  }

  private renderTop() {
    return html`
      <header class="titlebar">
        <svg width="16" height="16" viewBox="0 0 16 16" fill="none">
          <circle cx="7.500" cy="7.500" r="5.700" stroke="#7cae2f" stroke-width="3.600"/>
          <path d="M8 8l7 7.500" stroke="#589632" stroke-width="3.400"/>
          <path d="M6.500 6.500h3l1 3-3-1z" fill="#ee7913"/>
        </svg>
        <span class="title">*Dubai</span>
        <button class="win" aria-label="Minimize"><svg width="10" height="10" stroke="#000"><path d="M0 5.500h10"/></svg></button>
        <button class="win" aria-label="Maximize"><svg width="10" height="10" stroke="#000" fill="none"><path d="M.5 .5h9v9h-9z"/></svg></button>
        <button class="win" aria-label="Close"><svg width="10" height="10" stroke="#000"><path d="M0 0l10 10M10 0L0 10"/></svg></button>
      </header>
      <nav class="menubar">
        <a href="#"><u>L</u>ayout</a><a href="#"><u>E</u>dit</a><a href="#"><u>V</u>iew</a><a href="#"><u>I</u>tems</a>
        <a href="#"><u>A</u>dd Item</a><a href="#">Atlas</a><a href="#">Settings</a>
      </nav>
      <div class="bar" role="toolbar" aria-label="Layout">
        <i class="dots lead"></i>
        ${this.tool("save", "Save Project")}<i class="sep"></i>
        ${this.tool("newLayout", "New Layout")}${this.tool("duplicate", "Duplicate Layout")}${this.tool("manager", "Layout Manager")}
        ${this.tool("folder", "Add Items from Template")}${this.tool("saveTemplate", "Save as Template")}<i class="sep"></i>
        ${this.tool("addPage", "Add Pages")}<i class="sep"></i>
        ${this.tool("print", "Print")}${this.tool("exportImage", "Export as Image")}${this.tool("exportSvg", "Export as SVG")}
        ${this.tool("exportPdf", "Export as PDF")}${this.tool("undo", "Undo")}${this.tool("redo", "Redo", { off: true })}
        <span class="grip"><i class="dots"></i></span>
        ${ATLAS_OFF.map((n) => this.tool(n, n, { off: true }))}
        <span class="pageno"><input aria-label="Atlas page" value="1" disabled /><button aria-label="Choose atlas page" disabled>${this.down(8, 4, "#999")}</button></span>
        ${this.tool("next", "Next", { off: true })}${this.tool("last", "Last", { off: true })}${this.tool("print", "Print Atlas", { off: true })}
        ${this.tool("exportImage", "Export Atlas", { off: true })}<span class="caret">${this.down(8, 4, "#888")}</span>
        ${this.tool("atlasSettings", "Atlas Settings")}
      </div>
      <div class="bar second" role="toolbar" aria-label="Navigation and actions">
        <i class="dots lead"></i>
        ${this.tool("zoomIn", "Zoom In")}${this.tool("zoomOut", "Zoom Out")}${this.tool("zoomActual", "Zoom to 100%")}
        ${this.tool("zoomFull", "Zoom Full")}${this.tool("refresh", "Refresh View")}
        <span class="grip"><i class="dots"></i></span>
        ${this.tool("lock", "Lock Selected Items")}${this.tool("unlock", "Unlock All Items")}${this.tool("group", "Group")}
        ${this.tool("ungroup", "Ungroup")}${this.tool("raise", "Raise")}${this.tool("align", "Align Left")}
        ${this.tool("distribute", "Distribute")}${this.tool("resize", "Resize")}
      </div>`;
  }

  private renderItems() {
    const rows = [
      { id: "label", name: "Where are people and clin...", bold: true },
      { id: "map", name: "Map 1", bold: false },
    ];
    return html`
      <div class="tabs" role="tablist">
        <button class="tab on w52" role="tab" aria-selected="true">Items</button>
        <button class="tab w87" role="tab" aria-selected="false">Undo History</button>
      </div>
      ${this.head("Items")}
      <div class="list">
        <table>
          <thead>
            <tr>
              <th class="c1" aria-label="Visible"><svg width="20" height="12" viewBox="0 0 20 12" fill="none"><path d="M3 6.500q7-8 14 0-7 7-14 0z" fill="#e0e0e0" stroke="#aaa"/><path d="M3 3q7-4 14 1" stroke="#aaa"/><circle cx="10" cy="6" r="3.200" fill="#777"/><circle cx="10" cy="6" r="1.400" fill="#222"/></svg></th>
              <th class="c1" aria-label="Locked"><svg width="20" height="16" viewBox="0 0 20 16" fill="none"><path d="M6 8V5q0-4 4-4t4 4v3" stroke="#999" stroke-width="2"/><rect x="4" y="7" width="12" height="8" rx="1.500" fill="#636363"/></svg></th>
              <th>Item</th>
            </tr>
          </thead>
          <tbody>
            ${rows.map(
              (r) => html`<tr>
                <td><div class="in"><input type="checkbox" checked aria-label="Show ${r.name}" /></div></td>
                <td><div class="in"><input type="checkbox" aria-label="Lock ${r.name}" /></div></td>
                <td class="name"><div class=${classMap({ in: true, strong: r.bold })}>
                  ${r.id === "label"
                    ? html`<svg width="14" height="13" viewBox="0 0 14 13" fill="none"><path d="M.5 .5h13v12H.5z" fill="#f2f2f2" stroke="#999"/><path d="M4 4.500V3h6v1.500M7 3v7M5.500 10h3" stroke="#444"/></svg>`
                    : html`<svg width="14" height="13" viewBox="0 0 14 13" fill="none"><path d="M1.500 .5h12v12h-12z" fill="#d4d4d4" stroke="#999"/><path d="M.5 .5h3v11h-3z" fill="#eee" stroke="#aaa"/></svg>`}
                  <span>${r.name}</span></div></td>
              </tr>`
            )}
          </tbody>
        </table>
      </div>
      <div class="handle"><i class="dots flat"></i></div>`;
  }

  private renderProps() {
    return html`
      <div class="tabs" role="tablist">
        <button class="tab w58" role="tab" aria-selected="false">Layout</button>
        <button class="tab on w99" role="tab" aria-selected="true">Item Properties</button>
        <button class="tab w56" role="tab" aria-selected="false">Guides</button>
      </div>
      ${this.head("Item Properties")}
      <h3 class="kind">Label</h3>
      <div class="pane">
        <div class="props">
          <div class="group top">
            <textarea aria-label="Label text" spellcheck="false" .value=${"Where are people and clinics located?"}></textarea>
            <label class="check"><input type="checkbox" />Render as HTML</label>
            <div class="row pair">
              <div class="half"><button class="btn grow">Insert/Edit Expression...</button><button class="btn drop" aria-label="Expression options">${this.down()}</button></div>
              <button class="btn dyn">Dynamic Text${this.down(6, 3)}</button>
            </div>
          </div>
          <button class="section" aria-expanded="true"><svg width="12" height="8" viewBox="0 0 12 8"><path d="M0 0h12L6 8z" fill="#333"/></svg>Appearance</button>
          <div class="group">
            <div class="row"><button class="btn grow tall fontbtn">Font</button><button class="btn drop tall" aria-label="Font options">${this.down()}</button></div>
            <div class="form">
              <label for="color">Font color</label>
              <div class="row"><button id="color" class="btn color" aria-label="Font color"><span class="swatch"></span></button><button class="btn drop mid" aria-label="Color options">${this.down()}</button></div>
              ${this.spin("hm", "Horizontal margin")}${this.spin("vm", "Vertical margin")}
            </div>
            <fieldset>
              <legend>Horizontal alignment</legend>
              <div class="radios">
                ${["Left", "Center", "Right", "Justify"].map(
                  (a) => html`<label><input type="radio" name="halign" .checked=${this.align === a} @change=${() => (this.align = a)} />${a}</label>`
                )}
              </div>
            </fieldset>
            <fieldset><legend>Vertical alignment</legend></fieldset>
          </div>
        </div>
        <div class="vscroll">
          <button aria-label="Scroll up">${this.up()}</button>
          <i class="vthumb"></i><i class="rest"></i>
          <button aria-label="Scroll down">${this.down()}</button>
        </div>
      </div>`;
  }

  render() {
    return html`
      ${this.renderTop()}
      <div class="main">
        <div class="toolbox" role="toolbar" aria-label="Toolbox">
          <i class="dots flat"></i>
          ${this.tool("pan", "Pan")}${this.tool("zoomTool", "Zoom")}${this.tool("select", "Select/Move Item", { on: true })}
          ${this.tool("moveContent", "Move Content")}${this.tool("editNodes", "Edit Nodes")}${this.tool("addMap", "Add Map")}
          ${this.tool("add3d", "Add 3D Map")}${this.tool("addPicture", "Add Picture")}${this.tool("addLabel", "Add Label")}
          ${this.tool("addLegend", "Add Legend")}${this.tool("addScale", "Add Scale Bar")}${this.tool("addNorth", "Add North Arrow")}
          ${this.tool("addShape", "Add Shape")}${this.tool("addMarker", "Add Marker")}${this.tool("addArrow", "Add Arrow")}
          ${this.tool("addNode", "Add Node Item")}${this.tool("addHtml", "Add HTML")}${this.tool("addTable", "Add Attribute Table")}
          ${this.tool("addFixed", "Add Fixed Table")}
        </div>
        <div class="work">
          <layout-ruler class="topruler" .origin=${41} .cursor=${568}></layout-ruler>
          <layout-ruler class="sideruler" vertical .origin=${42} .cursor=${318}></layout-ruler>
          <div class="canvas"><layout-sheet></layout-sheet></div>
          <div class="hscroll">
            <button class="arrow" aria-label="Scroll left">${this.side("M4 0v8L0 4z")}</button>
            <i class="thumb"></i>
            <button class="arrow" aria-label="Scroll right">${this.side("M0 0v8l4-4z")}</button>
          </div>
        </div>
        <div class="split"><i class="dots"></i></div>
        <aside class="dock">${this.renderItems()}${this.renderProps()}</aside>
      </div>
      <footer class="status">
        <output>x: 184.952 mm</output><output>y: 96.8627 mm</output><output>page: 1</output>
        <span class="zoombox">
          <select aria-label="Zoom level" @change=${(e: Event) => (this.zoom = (e.target as HTMLSelectElement).value)}><option>${this.zoom}</option><option>100%</option></select>
          <span class="mark">${this.down()}</span>
        </span>
        <input class="slider" type="range" min="0" max="100" value="4" aria-label="Zoom" />
        <svg class="size" width="14" height="14" viewBox="0 0 14 14" fill="#b0b0b0"><path d="M10 2h1v1h-1zM7 5h1v1H7zM10 5h1v1h-1zM4 8h1v1H4zM7 8h1v1H7zM10 8h1v1h-1zM1 11h1v1H1zM4 11h1v1H4zM7 11h1v1H7zM10 11h1v1h-1z"/></svg>
      </footer>`;
  }
}
